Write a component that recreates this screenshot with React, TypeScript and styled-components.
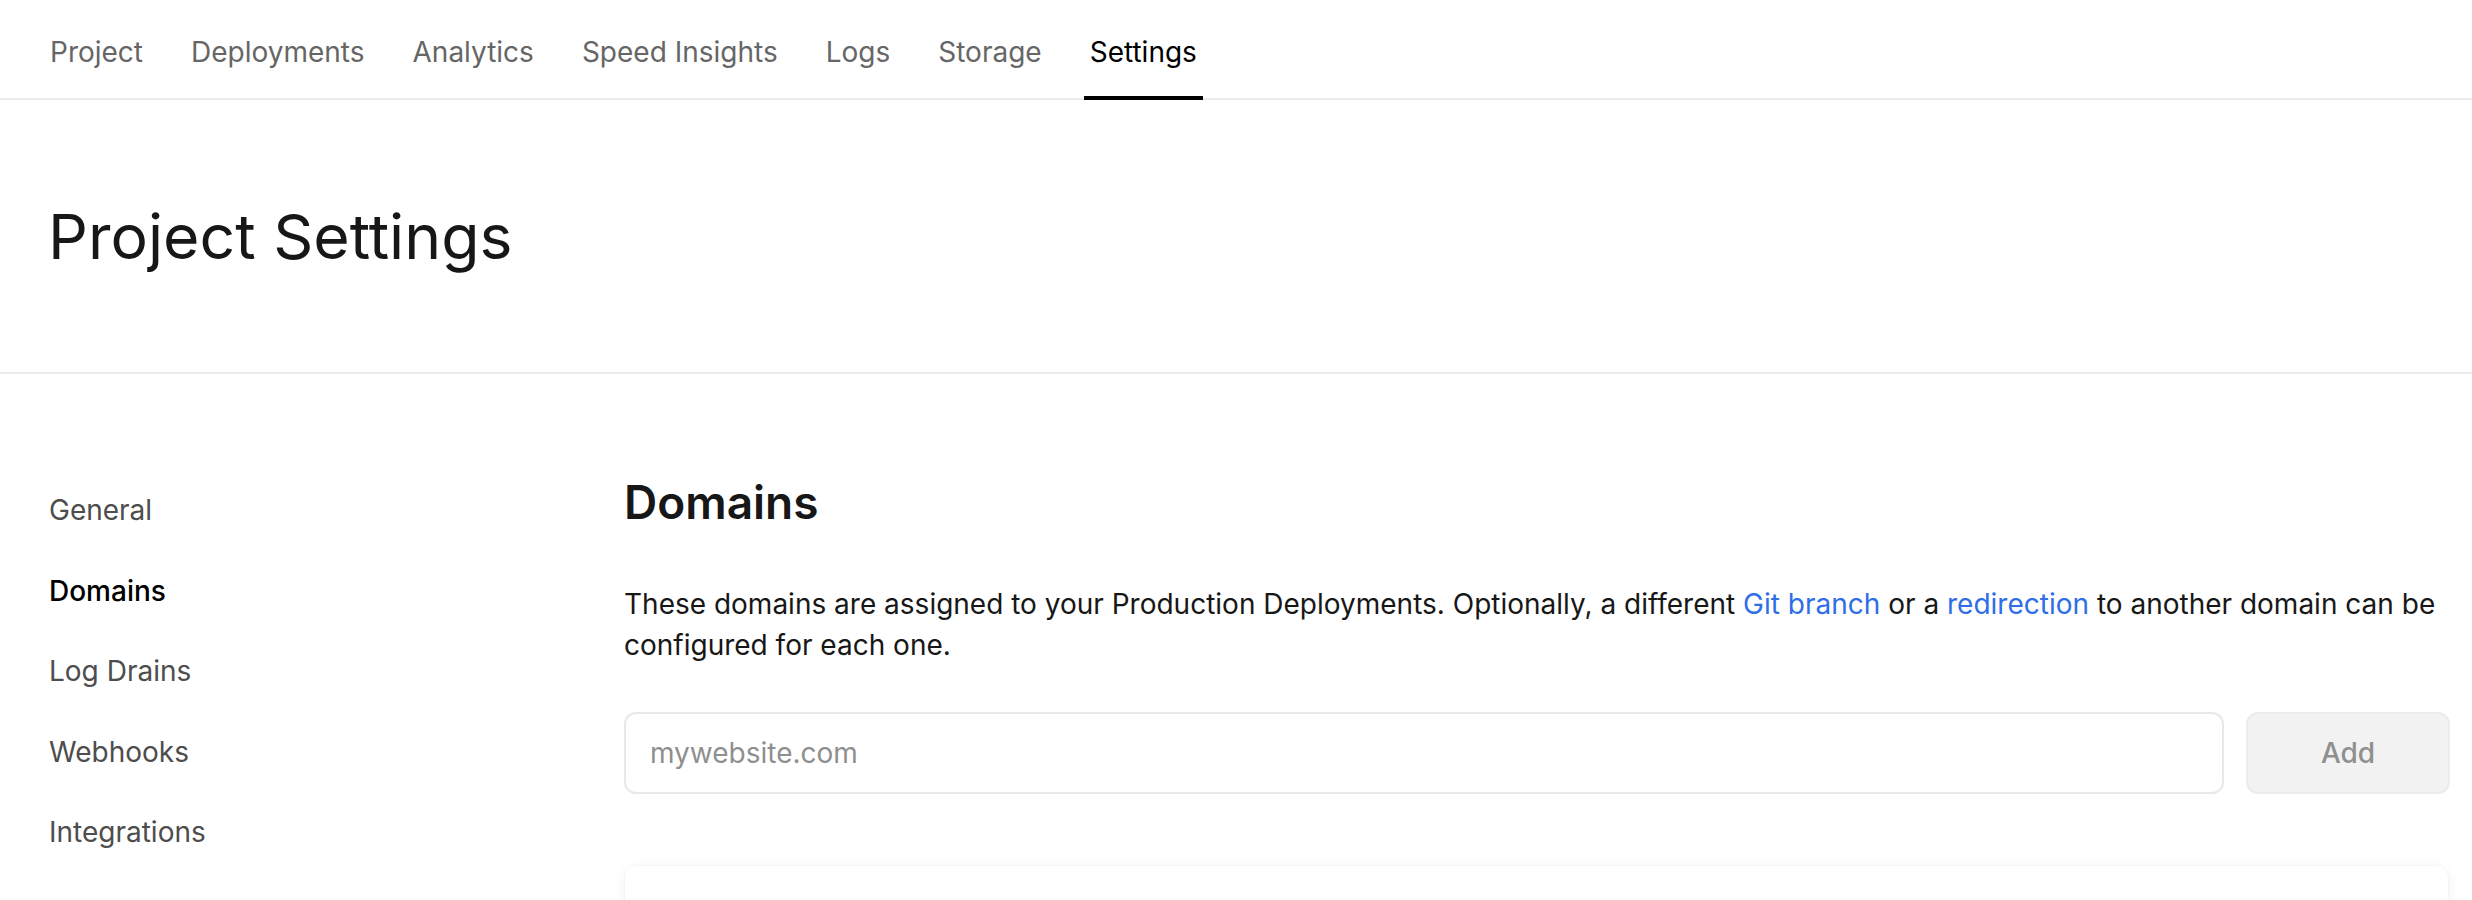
import React from 'react';
import styled, { createGlobalStyle } from 'styled-components';

const GlobalStyle = createGlobalStyle`
  * { box-sizing: border-box; }
  html, body {
    margin: 0;
    padding: 0;
    background: #fff;
    font-family: Inter, "Noto Sans", Arial, sans-serif;
    color: #171717;
  }
`;

const Page = styled.div`
  width: 100%;
  min-height: 100vh;
  overflow: hidden;
`;

const TabBar = styled.nav`
  display: flex;
  align-items: stretch;
  gap: 36px;
  height: 100px;
  padding: 0 44px;
  border-bottom: 2px solid #ebebeb;
`;

const Tab = styled.a<{ $active?: boolean }>`
  position: relative;
  display: flex;
  align-items: center;
  padding: 5px 6px 0;
  font-size: 28px;
  color: ${({ $active }) => ($active ? '#000' : '#666')};
  text-decoration: none;
  cursor: pointer;
  &::after {
    content: '';
    position: absolute;
    left: 0;
    right: 0;
    bottom: -2px;
    height: 4px;
    background: ${({ $active }) => ($active ? '#000' : 'transparent')};
  }
`;

const Header = styled.header`
  display: flex;
  align-items: center;
  height: 274px;
  padding: 0 48px;
  border-bottom: 2px solid #ebebeb;
`;

const Title = styled.h1`
  margin: 0;
  font-size: 62.5px;
  font-weight: 400;
  color: #171717;
`;

const Body = styled.div`
  display: grid;
  grid-template-columns: 575px 1fr;
  padding: 96px 22px 0 49px;
`;

const SideNav = styled.ul`
  list-style: none;
  margin: 0;
  padding: 0;
`;

const SideItem = styled.li<{ $active?: boolean }>`
  display: flex;
  align-items: center;
  height: 80.5px;
  font-size: 28px;
  font-weight: ${({ $active }) => ($active ? 500 : 400)};
  color: ${({ $active }) => ($active ? '#000' : '#4d4d4d')};
  cursor: pointer;
`;

const Main = styled.main`
  display: flex;
  flex-direction: column;
`;

const SectionTitle = styled.h2`
  margin: 4px 0 0;
  font-size: 46px;
  line-height: 56px;
  font-weight: 600;
  color: #171717;
`;

const Description = styled.p`
  margin: 54px 0 0;
  font-size: 28px;
  line-height: 41px;
  color: #171717;
`;

const Link = styled.a`
  color: #2e6ee6;
  text-decoration: none;
`;

const AddRow = styled.div`
  display: flex;
  gap: 22px;
  margin-top: 46px;
`;

const DomainInput = styled.input`
  flex: 1;
  height: 82px;
  padding: 0 24px;
  border: 2px solid #e8e8e8;
  border-radius: 12px;
  font-family: inherit;
  font-size: 28px;
  color: #171717;
  background: #fff;
  outline: none;
  &::placeholder {
    color: #8f8f8f;
  }
`;

const AddButton = styled.button`
  width: 204px;
  height: 82px;
  border: 2px solid #ebebeb;
  border-radius: 12px;
  background: #f2f2f2;
  font-family: inherit;
  font-size: 28px;
  font-weight: 500;
  color: #8f8f8f;
  cursor: not-allowed;
`;

const Card = styled.section`
  margin: 72px 2px 0 1px;
  height: 300px;
  border-radius: 12px;
  background: #fff;
  box-shadow: 0 0 0 1px rgba(0, 0, 0, 0.015), 0 2px 14px rgba(0, 0, 0, 0.06);
`;

const tabs = ['Project', 'Deployments', 'Analytics', 'Speed Insights', 'Logs', 'Storage', 'Settings'];
const sideItems = ['General', 'Domains', 'Log Drains', 'Webhooks', 'Integrations', 'Git', 'Environment Variables'];

export default function App() {
  return (
    <Page>
      <GlobalStyle />
      <TabBar>
        {tabs.map((t) => (
          <Tab key={t} $active={t === 'Settings'}>{t}</Tab>
        ))}
      </TabBar>
      <Header>
        <Title>Project Settings</Title>
      </Header>
      <Body>
        <SideNav>
          {sideItems.map((s) => (
            <SideItem key={s} $active={s === 'Domains'}>{s}</SideItem>
          ))}
        </SideNav>
        <Main>
          <SectionTitle>Domains</SectionTitle>
          <Description>
            These domains are assigned to your Production Deployments. Optionally, a different{' '}
            <Link>Git branch</Link> or a <Link>redirection</Link> to another domain can be configured
            for each one.
          </Description>
          <AddRow>
            <DomainInput placeholder="mywebsite.com" />
            <AddButton disabled>Add</AddButton>
          </AddRow>
          <Card />
        </Main>
      </Body>
    </Page>
  );
}
